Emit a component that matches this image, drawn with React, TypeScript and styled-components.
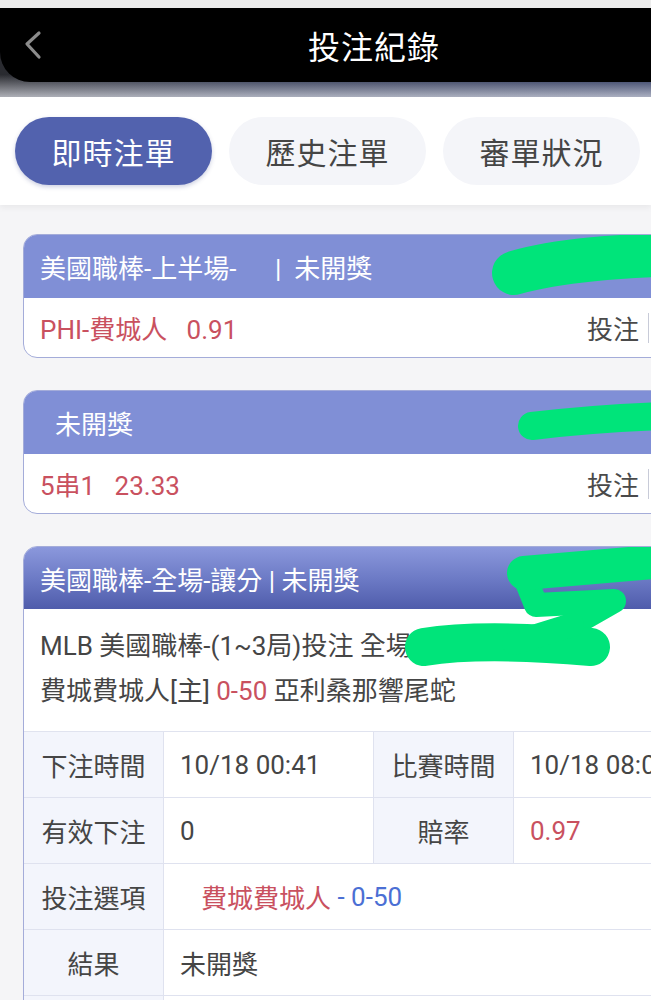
import React from "react";
import styled, { createGlobalStyle } from "styled-components";

const GlobalStyle = createGlobalStyle`
  html, body {
    margin: 0;
    padding: 0;
    background: #f5f5f7;
    overflow-x: hidden;
  }
  body {
    font-family: Roboto, "Noto Sans CJK TC", "Noto Sans", sans-serif;
    color: #4a4a4a;
  }
`;

const Page = styled.div`
  width: 651px;
  min-height: 1000px;
  background: #f5f5f7;
`;

const NavShell = styled.div`
  border-top: 8px solid #ececec;
  padding-bottom: 15px;
  background: linear-gradient(180deg, rgba(255, 255, 255, 0) 75%, rgba(230, 232, 240, 0.7) 100%),
    linear-gradient(90deg, #2a2b30 0%, #222a45 40%, #212c54 100%);
`;

const NavBar = styled.div`
  height: 74px;
  background: #000;
  border-bottom-left-radius: 30px;
  display: flex;
  align-items: center;
  padding-left: 24px;
`;

const NavTitle = styled.h1`
  flex: 1;
  margin: 0;
  padding-left: 55px;
  text-align: center;
  color: #fff;
  font-size: 32px;
  font-weight: 400;
  letter-spacing: 1px;
`;

const TabPanel = styled.div`
  background: #fff;
  height: 108px;
  box-sizing: border-box;
  padding: 20px 15px;
  display: flex;
  gap: 17px;
  box-shadow: 0 3px 6px rgba(0, 0, 0, 0.05);
`;

const Tab = styled.button<{ $active?: boolean }>`
  width: 197px;
  height: 68px;
  flex: none;
  border: none;
  border-radius: 34px;
  background: ${(p) => (p.$active ? "#5262ae" : "#f4f5f9")};
  color: ${(p) => (p.$active ? "#fff" : "#454545")};
  font-family: inherit;
  font-size: 30px;
  letter-spacing: 1px;
  box-shadow: ${(p) => (p.$active ? "0 2px 4px rgba(60,70,140,0.25)" : "none")};
`;

const List = styled.div`
  display: flex;
  flex-direction: column;
  gap: 32px;
  padding: 29px 0 40px 23px;
`;

const Card = styled.div`
  position: relative;
  width: 720px;
  background: #fff;
  border: 1px solid #a4acd9;
  border-radius: 14px;
  overflow: hidden;
`;

const CardHeader = styled.div<{ $gradient?: boolean; $indent?: number }>`
  height: ${(p) => (p.$gradient ? 62 : 63)}px;
  display: flex;
  align-items: center;
  padding-left: ${(p) => p.$indent ?? 16}px;
  background: ${(p) =>
    p.$gradient ? "linear-gradient(180deg, #8b98dc 0%, #6d7bc6 50%, #4f5cab 100%)" : "#808fd6"};
  color: #fff;
  font-size: 26px;
  white-space: pre;
`;

const BetRow = styled.div`
  height: 59px;
  display: flex;
  align-items: center;
  justify-content: space-between;
  padding: 0 0 0 16px;
  font-size: 26px;
  white-space: pre;
`;

const Red = styled.span`
  color: #c9515f;
`;

const Blue = styled.span`
  color: #4b6fd4;
`;

const Stake = styled.div`
  display: flex;
  align-items: center;
  color: #4a4a4a;
  width: 157px;
  &::after {
    content: "";
    width: 1px;
    height: 30px;
    margin-left: 9px;
    background: #c8cbd8;
  }
`;

const Description = styled.div`
  height: 123px;
  box-sizing: border-box;
  padding: 15px 16px 0;
  font-size: 26px;
  line-height: 45px;
  color: #454545;
  border-bottom: 1px solid #e0e3ef;
  white-space: nowrap;
`;

const InfoGrid = styled.div`
  display: grid;
  grid-template-columns: 140px 210px 140px 1fr;
  grid-auto-rows: 66px;
`;

const Cell = styled.div<{ $label?: boolean; $span?: number; $indent?: number }>`
  grid-column: span ${(p) => p.$span ?? 1};
  display: flex;
  align-items: center;
  justify-content: ${(p) => (p.$label ? "center" : "flex-start")};
  padding-left: ${(p) => (p.$label ? 0 : p.$indent ?? 16)}px;
  background: ${(p) => (p.$label ? "#f3f5fc" : "#fff")};
  border-right: 1px solid #dfe2ef;
  border-bottom: 1px solid #dfe2ef;
  font-size: 26px;
  color: #454545;
  white-space: nowrap;
`;

const Scribble = styled.svg`
  position: absolute;
  left: 0;
  top: 0;
  pointer-events: none;
`;

const ink = "#00e47a";

const BackIcon = () => (
  <svg width="18" height="30" viewBox="0 0 18 30">
    <path d="M15 3 L3 14 L15 27" fill="none" stroke="#8c8c8c" strokeWidth="3.2" strokeLinecap="round" strokeLinejoin="round" />
  </svg>
);

const tabs = ["即時注單", "歷史注單", "審單狀況"];

export default function App() {
  return (
    <Page>
      <GlobalStyle />
      <NavShell>
        <NavBar>
          <BackIcon />
          <NavTitle>投注紀錄</NavTitle>
        </NavBar>
      </NavShell>

      <TabPanel>
        {tabs.map((t, i) => (
          <Tab key={t} $active={i === 0}>
            {t}
          </Tab>
        ))}
      </TabPanel>

      <List>
        <Card>
          <CardHeader>{"美國職棒-上半場-      |  未開獎"}</CardHeader>
          <BetRow>
            <Red>{"PHI-費城人   0.91"}</Red>
            <Stake>投注</Stake>
          </BetRow>
          <Scribble width="720" height="70">
            <path d="M490 38 C 530 26, 590 20, 700 18" fill="none" stroke={ink} strokeWidth="44" strokeLinecap="round" />
          </Scribble>
        </Card>

        <Card>
          <CardHeader $indent={31}>未開獎</CardHeader>
          <BetRow>
            <Red>{"5串1   23.33"}</Red>
            <Stake>投注</Stake>
          </BetRow>
          <Scribble width="720" height="60">
            <path d="M508 35 C 550 30, 620 24, 700 24" fill="none" stroke={ink} strokeWidth="28" strokeLinecap="round" />
          </Scribble>
        </Card>

        <Card>
          <CardHeader $gradient>{"美國職棒-全場-讓分 | 未開獎"}</CardHeader>
          <Description>
            <div>MLB 美國職棒-(1~3局)投注 全場</div>
            <div>
              費城費城人[主] <Red>0-50</Red> 亞利桑那響尾蛇
            </div>
          </Description>
          <InfoGrid>
            <Cell $label>下注時間</Cell>
            <Cell>10/18 00:41</Cell>
            <Cell $label>比賽時間</Cell>
            <Cell>10/18 08:05</Cell>
            <Cell $label>有效下注</Cell>
            <Cell>0</Cell>
            <Cell $label>賠率</Cell>
            <Cell>
              <Red>0.97</Red>
            </Cell>
            <Cell $label>投注選項</Cell>
            <Cell $span={3} $indent={37}>
              <Red>費城費城人</Red>
              <Blue>&nbsp;- 0-50</Blue>
            </Cell>
            <Cell $label>結果</Cell>
            <Cell $span={3}>未開獎</Cell>
            <Cell $label> </Cell>
            <Cell $span={3}> </Cell>
          </InfoGrid>
          <Scribble width="720" height="130">
            <path d="M700 14 L 500 28 L 512 58 L 590 54 L 548 78" fill="none" stroke={ink} strokeWidth="24" strokeLinecap="round" strokeLinejoin="round" />
            <path d="M500 26 L 640 14" fill="none" stroke={ink} strokeWidth="34" strokeLinecap="round" />
            <path d="M400 100 C 450 92, 520 96, 567 100" fill="none" stroke={ink} strokeWidth="38" strokeLinecap="round" />
            <path d="M548 78 L 490 96" fill="none" stroke={ink} strokeWidth="24" strokeLinecap="round" />
          </Scribble>
        </Card>
      </List>
    </Page>
  );
}
